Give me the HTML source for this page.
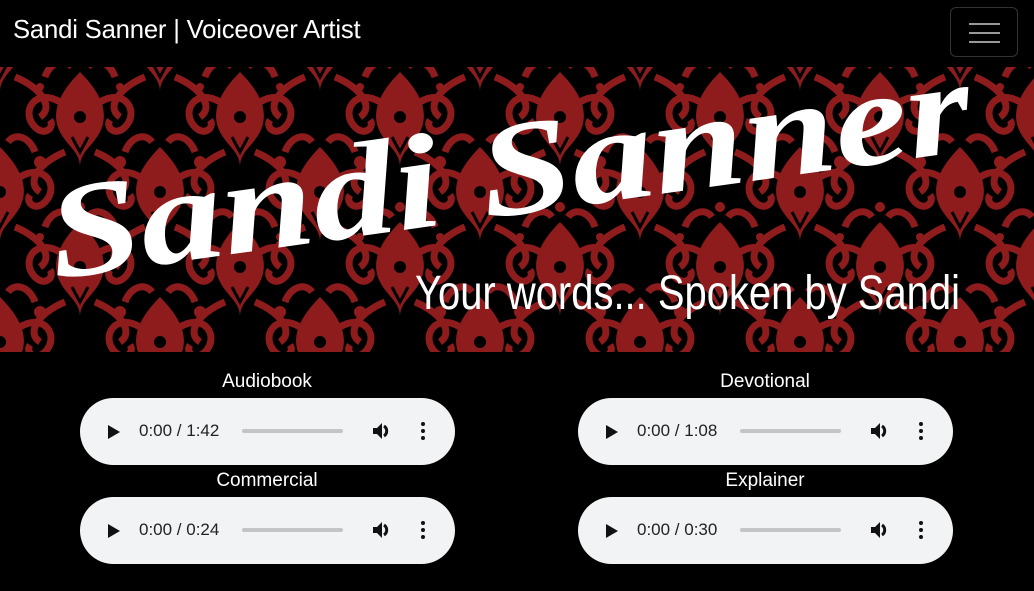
<!DOCTYPE html>
<html><head><meta charset="utf-8"><style>
*{margin:0;padding:0;box-sizing:border-box}
body{width:1034px;height:591px;background:#000;overflow:hidden;font-family:"Liberation Sans",sans-serif;position:relative}
.brand{position:absolute;left:13px;top:16px;color:#fff;font-size:25.7px;letter-spacing:-0.2px}
.tog{position:absolute;left:950px;top:7px;width:68px;height:50px;border:1px solid #333;border-radius:6px}
.tog i{position:absolute;left:18px;width:31px;height:2px;background:#999}
.banner{position:absolute;left:0;top:67px;width:1034px;height:285px;overflow:hidden}
.lbl{position:absolute;color:#fff;font-size:19px;text-align:center;width:300px}
.pl{position:absolute;width:375px;height:67px;border-radius:34px;background:#f1f3f4}
.pl .play{position:absolute;left:28px;top:27px;width:0;height:0;border-left:12px solid #111;border-top:7px solid transparent;border-bottom:7px solid transparent}
.pl .t{position:absolute;left:59px;top:23px;font-size:17px;color:#222}
.pl .bar{position:absolute;left:162px;top:31px;width:101px;height:4px;border-radius:2px;background:#c2c4c6}
.pl .vol{position:absolute;left:292px;top:23px}
.pl .dots{position:absolute;left:340px;top:23px}
</style></head><body>
<div class="brand">Sandi Sanner | Voiceover Artist</div>
<div class="tog"><i style="top:15px"></i><i style="top:24px"></i><i style="top:33px"></i></div>
<div class="banner">
<svg width="1034" height="285">
<defs>
<g id="m" fill="none" stroke="#8e1c1c" stroke-width="7">
<path d="M0 -50 C20 -30 30 -10 20 10 C12 25 0 30 0 45 C0 30 -12 25 -20 10 C-30 -10 -20 -30 0 -50Z" fill="#8e1c1c" stroke="none"/>
<path d="M-20 -20 C-45 -35 -60 -10 -45 5 C-35 15 -25 5 -30 -2"/>
<path d="M20 -20 C45 -35 60 -10 45 5 C35 15 25 5 30 -2"/>
<path d="M-15 30 C-40 40 -55 60 -40 70 M15 30 C40 40 55 60 40 70"/>
<path d="M-35 -45 C-30 -60 -15 -65 -8 -55 M35 -45 C30 -60 15 -65 8 -55"/>
<circle cx="0" cy="-5" r="6" fill="#000" stroke="none"/>
<path d="M-8 15 L0 30 L8 15" stroke="#000" stroke-width="3"/>
</g>
<pattern id="d" width="160" height="150" patternUnits="userSpaceOnUse">
<rect width="160" height="150" fill="#000"/>
<use href="#m" x="80" y="55"/>
<use href="#m" x="80" y="205"/><use href="#m" x="80" y="-95"/>
<use href="#m" x="0" y="130"/><use href="#m" x="160" y="130"/>
<use href="#m" x="0" y="-20"/><use href="#m" x="160" y="-20"/>
<g fill="#8e1c1c"><circle cx="40" cy="95" r="6"/><circle cx="120" cy="95" r="6"/><circle cx="80" cy="140" r="5"/><circle cx="40" cy="20" r="4"/><circle cx="120" cy="20" r="4"/></g>
</pattern></defs>
<rect width="1034" height="285" fill="url(#d)"/>
<text x="55" y="212" transform="rotate(-8 55 212)" font-family="Liberation Serif,serif" font-style="italic" font-weight="bold" font-size="135" fill="#fff" textLength="930" lengthAdjust="spacingAndGlyphs">Sandi Sanner</text>
<text x="415" y="242" font-family="Liberation Sans,sans-serif" font-size="48" fill="#fff" textLength="545" lengthAdjust="spacingAndGlyphs">Your words... Spoken by Sandi</text>
</svg>
</div>

<div class="lbl" style="left:117px;top:371px">Audiobook</div>
<div class="lbl" style="left:615px;top:371px">Devotional</div>
<div class="lbl" style="left:117px;top:470px">Commercial</div>
<div class="lbl" style="left:615px;top:470px">Explainer</div>

<div class="pl" style="left:80px;top:398px"><div class="play"></div><div class="t">0:00 / 1:42</div><div class="bar"></div>
<svg class="vol" width="20" height="20" viewBox="0 0 20 20"><path d="M1 7h4l5-5v16l-5-5H1z" fill="#111"/><path d="M12 5a6 6 0 0 1 0 10" stroke="#111" stroke-width="3" fill="none"/></svg>
<svg class="dots" width="6" height="20"><circle cx="3" cy="3" r="2" fill="#111"/><circle cx="3" cy="10" r="2" fill="#111"/><circle cx="3" cy="17" r="2" fill="#111"/></svg></div>
<div class="pl" style="left:578px;top:398px"><div class="play"></div><div class="t">0:00 / 1:08</div><div class="bar"></div>
<svg class="vol" width="20" height="20" viewBox="0 0 20 20"><path d="M1 7h4l5-5v16l-5-5H1z" fill="#111"/><path d="M12 5a6 6 0 0 1 0 10" stroke="#111" stroke-width="3" fill="none"/></svg>
<svg class="dots" width="6" height="20"><circle cx="3" cy="3" r="2" fill="#111"/><circle cx="3" cy="10" r="2" fill="#111"/><circle cx="3" cy="17" r="2" fill="#111"/></svg></div>
<div class="pl" style="left:80px;top:497px"><div class="play"></div><div class="t">0:00 / 0:24</div><div class="bar"></div>
<svg class="vol" width="20" height="20" viewBox="0 0 20 20"><path d="M1 7h4l5-5v16l-5-5H1z" fill="#111"/><path d="M12 5a6 6 0 0 1 0 10" stroke="#111" stroke-width="3" fill="none"/></svg>
<svg class="dots" width="6" height="20"><circle cx="3" cy="3" r="2" fill="#111"/><circle cx="3" cy="10" r="2" fill="#111"/><circle cx="3" cy="17" r="2" fill="#111"/></svg></div>
<div class="pl" style="left:578px;top:497px"><div class="play"></div><div class="t">0:00 / 0:30</div><div class="bar"></div>
<svg class="vol" width="20" height="20" viewBox="0 0 20 20"><path d="M1 7h4l5-5v16l-5-5H1z" fill="#111"/><path d="M12 5a6 6 0 0 1 0 10" stroke="#111" stroke-width="3" fill="none"/></svg>
<svg class="dots" width="6" height="20"><circle cx="3" cy="3" r="2" fill="#111"/><circle cx="3" cy="10" r="2" fill="#111"/><circle cx="3" cy="17" r="2" fill="#111"/></svg></div>
</body></html>
